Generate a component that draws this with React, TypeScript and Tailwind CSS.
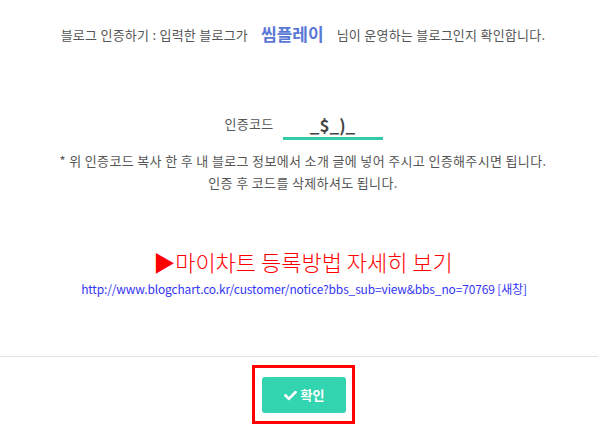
import React from "react";
import { FaCheck } from "react-icons/fa";

export default function App() {
  return (
    <div className="w-[598px] h-[442px] bg-white font-['Noto_Sans_CJK_KR','Malgun_Gothic',sans-serif] text-[#555] overflow-hidden">
      <div className="pt-[24px] pl-[8px] text-center text-[13px] leading-[20px] tracking-[0.25px]">
        블로그 인증하기 : 입력한 블로그가
        <span className="mx-[13px] text-[17px] font-bold text-[#5a78d6] align-[-1px] tracking-[0px]">씸플레이</span>
        님이 운영하는 블로그인지 확인합니다.
      </div>

      <div className="mt-[68px] flex items-end justify-center pl-[9px]">
        <span className="text-[13px] leading-[20px] mb-[6px] tracking-[0.3px]">인증코드</span>
        <div className="ml-[9px] w-[100px] border-b-[3px] border-[#33cca8] text-center text-[17px] font-bold text-[#444] leading-[24px]">
          _$_)_
        </div>
      </div>

      <div className="mt-[10px] pl-[8px] text-center text-[13px] leading-[22px] tracking-[0.35px]">
        <div>* 위 인증코드 복사 한 후 내 블로그 정보에서 소개 글에 넣어 주시고 인증해주시면 됩니다.</div>
        <div>인증 후 코드를 삭제하셔도 됩니다.</div>
      </div>

      <div className="mt-[52px] pl-[8px] text-center text-[22px] leading-[30px] text-[#ff0000] font-light">
        ▶마이차트 등록방법 자세히 보기
      </div>
      <div className="mt-[4px] pl-[10px] text-center text-[12px] leading-[18px] text-[#3535f5] tracking-[-0.15px]">
        http://www.blogchart.co.kr/customer/notice?bbs_sub=view&amp;bbs_no=70769 [새창]
      </div>

      <div className="mt-[58px] border-t border-[#e3e3e3]" />

      <div className="mt-[8px] flex justify-center pl-[9px]">
        <div className="border-[3px] border-[#ff0000] pl-[7px] pr-[6px] pt-[9px] pb-[8px]">
          <button className="flex h-[36px] w-[84px] items-center justify-center gap-[4px] rounded-[3px] bg-[#33d4b0] text-[13px] font-bold text-white">
            <FaCheck className="h-[13px] w-[13px]" />
            확인
          </button>
        </div>
      </div>
    </div>
  );
}
